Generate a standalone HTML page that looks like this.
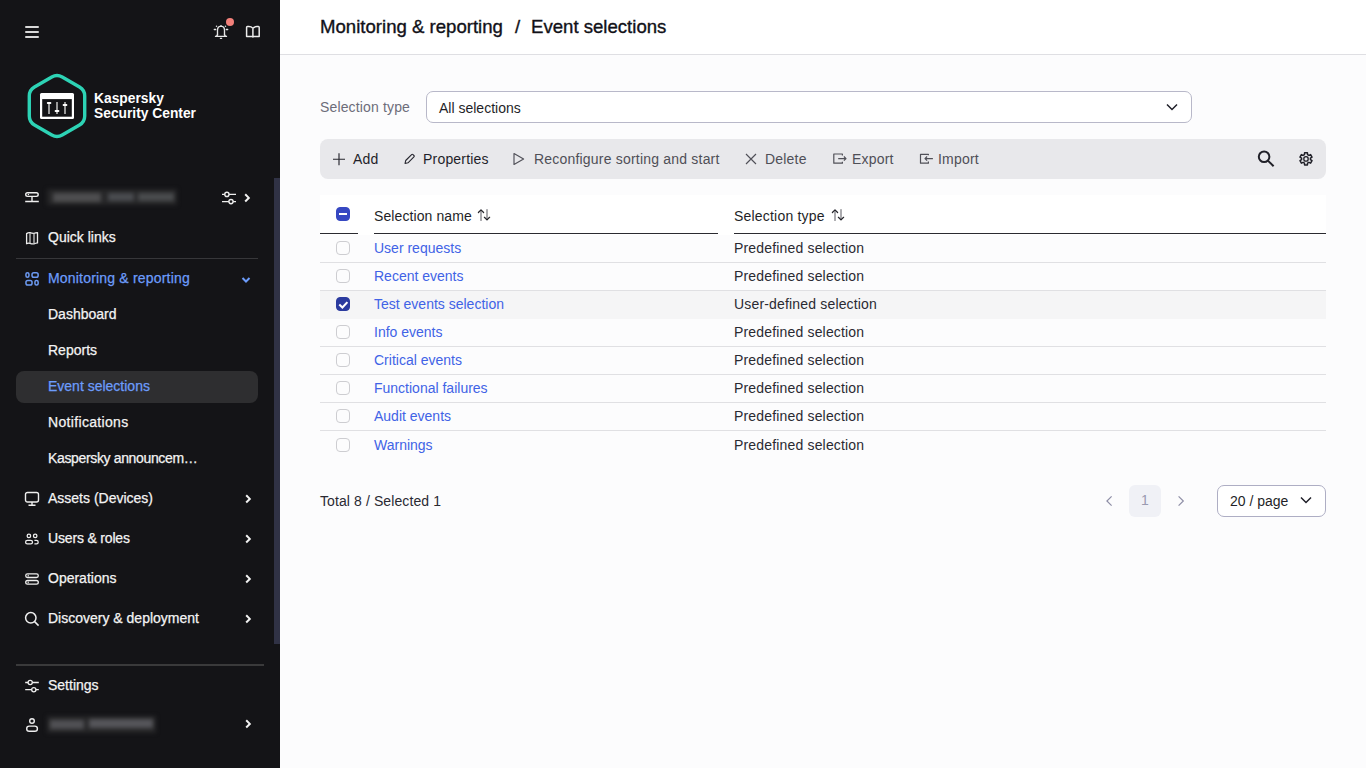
<!DOCTYPE html>
<html><head><meta charset="utf-8">
<style>
*{box-sizing:border-box;margin:0;padding:0}
html,body{width:1366px;height:768px;overflow:hidden}
body{font-family:"Liberation Sans",sans-serif;font-size:14px;background:#fcfcfd;position:relative;color:#2a2a32}
.a{position:absolute}
#side{left:0;top:0;width:280px;height:768px;background:#141417;color:#f3f3f3}
.mi{position:absolute;-webkit-text-stroke:0.25px currentColor;left:48px;height:20px;line-height:20px;white-space:nowrap}
.ic{position:absolute}
.chev{position:absolute;left:244px}
#main{left:280px;top:0;width:1086px;height:768px}
.t{position:absolute;margin-top:1px;height:20px;line-height:20px;white-space:nowrap}
.row{position:absolute;left:320px;width:1006px;border-top:1px solid #e0e0e3}
.cb{position:absolute;left:336px;width:14px;height:14px;border:1px solid #cdcdd1;border-radius:4px;background:transparent}
.lk{color:#4163e6}
.tb{position:absolute;margin-top:1px;letter-spacing:0.2px;top:148px;height:20px;line-height:20px;white-space:nowrap}
.dis{color:#4f4f57}
</style></head><body>
<div id="side" class="a">
  <!-- hamburger -->
  <div class="a" style="left:25px;top:26px;width:14px;height:2px;background:#d8d8d8;border-radius:1px"></div>
  <div class="a" style="left:25px;top:31px;width:14px;height:2px;background:#d8d8d8;border-radius:1px"></div>
  <div class="a" style="left:25px;top:36px;width:14px;height:2px;background:#d8d8d8;border-radius:1px"></div>
  <!-- bell -->
  <svg class="a" style="left:210px;top:20px" width="22" height="22" viewBox="210 20 22 22" fill="none" stroke="#e6e6e6" stroke-width="1.35" stroke-linecap="round">
    <path d="M217.5 35V30.2Q217.5 26.4 221 26.1Q224.5 26.4 224.5 30.2V35"/><path d="M215.5 36.3H226.5M215.5 36.3Q217.5 36 217.5 34.6M226.5 36.3Q224.5 36 224.5 34.6"/><path d="M220.4 38.3H221.6"/>
    <path d="M214.3 29.5H215.7M226.3 29.5H227.7"/><circle cx="216.5" cy="26.3" r=".75" fill="#e6e6e6" stroke="none"/><circle cx="225.5" cy="26.3" r=".75" fill="#e6e6e6" stroke="none"/><circle cx="221" cy="25.6" r=".7" fill="#e6e6e6" stroke="none"/>
  </svg>
  <div class="a" style="left:225.6px;top:17.7px;width:8.5px;height:8.5px;border-radius:50%;background:#f3807a"></div>
  <!-- book -->
  <svg class="a" style="left:240px;top:20px" width="25" height="22" viewBox="240 20 25 22" fill="none" stroke="#ececec" stroke-width="1.5" stroke-linejoin="round">
    <path d="M252.9 28.2Q251.3 26.6 248.8 26.6H247.4Q246.6 26.6 246.6 27.4V36.4H252.9"/><path d="M252.9 28.2Q254.5 26.6 257 26.6H258.4Q259.2 26.6 259.2 27.4V36.4H252.9"/><path d="M252.9 28.2V37.6"/>
  </svg>
  <!-- logo -->
  <svg class="a" style="left:0;top:0" width="100" height="150" viewBox="0 0 100 150">
    <path d="M51.80 77.00 Q57.00 74.00 62.20 77.00 L79.52 87.00 Q84.71 90.00 84.71 96.00 L84.71 116.00 Q84.71 122.00 79.52 125.00 L62.20 135.00 Q57.00 138.00 51.80 135.00 L34.48 125.00 Q29.29 122.00 29.29 116.00 L29.29 96.00 Q29.29 90.00 34.48 87.00 Z" fill="none" stroke="#2dd3b5" stroke-width="3.4"/>
    <rect x="40" y="93" width="34" height="26" rx="1.5" fill="#fff"/>
    <rect x="42.2" y="99.1" width="29.6" height="17.6" fill="#141417"/>
    <rect x="48" y="102" width="2" height="12" fill="#999"/>
    <rect x="56" y="102" width="2" height="12" fill="#999"/>
    <rect x="64" y="102" width="2" height="12" fill="#999"/>
    <rect x="46.8" y="102" width="4.6" height="2" rx="1" fill="#fff"/>
    <rect x="54.6" y="110.1" width="4.8" height="2" rx="1" fill="#fff"/>
    <rect x="62.6" y="104.1" width="4.8" height="2" rx="1" fill="#fff"/>
  </svg>
  <div class="a" style="left:94px;top:91px;font-weight:bold;font-size:13.8px;line-height:15px;color:#fff">Kaspersky<br>Security Center</div>

  <!-- server row -->
  <svg class="ic" style="left:20px;top:186px" width="24" height="24" viewBox="20 186 24 24" fill="none" stroke="#eee" stroke-width="1.4">
    <rect x="25.7" y="192.8" width="12.5" height="3.6" rx="1.8"/><path d="M32 196.6v4.9M25.2 201.5h13.6"/><circle cx="28.4" cy="194.5" r=".7" fill="#eee" stroke="none"/>
  </svg>
  <div class="a" style="left:47px;top:189px;width:130px;height:16px;filter:blur(2.2px)"><div class="a" style="left:0;top:0;width:130px;height:16px;background:#262628"></div><div class="a" style="left:6px;top:4px;width:48px;height:9px;background:#4e4e50"></div><div class="a" style="left:61px;top:4px;width:26px;height:8px;background:#4a4c50"></div><div class="a" style="left:91px;top:4px;width:36px;height:8px;background:#4a4c4e"></div></div>
  <svg class="ic" style="left:218px;top:188px" width="22" height="18" viewBox="218 188 22 18" fill="none" stroke="#eee" stroke-width="1.4"><path d="M222 194.4H224.8M229 194.4H236M222 201.6H228.9M233.1 201.6H236"/><circle cx="226.9" cy="194.4" r="2.1"/><circle cx="231" cy="201.6" r="2.1"/></svg>
  <svg class="chev" style="left:242px;top:192px" width="10" height="11" viewBox="0 0 10 11" fill="none" stroke="#f2f2f2" stroke-width="2"><path d="M3.2 2.3l3.6 3.6-3.6 3.6"/></svg>

  <!-- Quick links -->
  <svg class="ic" style="left:20px;top:226px" width="24" height="24" viewBox="20 226 24 24" fill="none" stroke="#eee" stroke-width="1.3" stroke-linejoin="round">
    <path d="M26.6 233.6Q28.3 232.4 30 232.7Q32 233.4 34 233.3Q35.6 232.8 37.5 232.6V242.9Q35.8 243.2 34 243.8Q32 244 30 243.3Q28.3 242.8 26.6 243.7Z"/><path d="M30 232.9v10.3M34 233.3v10.3" stroke="#c8c8c8"/>
  </svg>
  <div class="mi" style="top:227px">Quick links</div>
  <div class="a" style="left:16px;top:258px;width:242px;height:1px;background:#37373a"></div>

  <!-- Monitoring -->
  <svg class="ic" style="left:20px;top:266px" width="24" height="24" viewBox="20 266 24 24" fill="none" stroke="#6c9af2" stroke-width="1.5">
    <rect x="25.95" y="272.85" width="3" height="4.4" rx="1.5"/><rect x="32" y="272.85" width="6.15" height="4.4" rx="1.8"/><rect x="25.95" y="280.5" width="6.1" height="4.55" rx="1.8"/><rect x="34.95" y="280.5" width="3.2" height="4.55" rx="1.5"/>
  </svg>
  <div class="mi" style="top:268px;color:#6c9cfb;letter-spacing:0.19px">Monitoring &amp; reporting</div>
  <svg class="chev" style="left:241px;top:276px" width="10" height="8" viewBox="0 0 10 8" fill="none" stroke="#6c9cfb" stroke-width="2"><path d="M1.5 2l3.5 3.5 3.5-3.5"/></svg>

  <div class="mi" style="top:304px">Dashboard</div>
  <div class="mi" style="top:340px">Reports</div>
  <div class="a" style="left:16px;top:371px;width:242px;height:32px;background:#2e2e30;border-radius:8px"></div>
  <div class="mi" style="top:376px;color:#6c9cfb">Event selections</div>
  <div class="mi" style="top:412px;letter-spacing:0.33px">Notifications</div>
  <div class="mi" style="top:448px;letter-spacing:-0.35px">Kaspersky announcem…</div>

  <!-- Assets -->
  <svg class="ic" style="left:24px;top:491px" width="16" height="16" viewBox="0 0 16 16" fill="none" stroke="#eee" stroke-width="1.4">
    <rect x="1.5" y="1.5" width="13" height="9.5" rx="2"/><path d="M8 11v3.3M4.5 14.3h7"/>
  </svg>
  <div class="mi" style="top:488px">Assets (Devices)</div>
  <svg class="chev" style="left:243px;top:493px" width="10" height="11" viewBox="0 0 10 11" fill="none" stroke="#f2f2f2" stroke-width="2"><path d="M3.2 2.3l3.6 3.6-3.6 3.6"/></svg>

  <svg class="ic" style="left:20px;top:528px" width="24" height="22" viewBox="20 528 24 22" fill="none" stroke="#eee" stroke-width="1.3"><circle cx="28.9" cy="535.9" r="1.75"/><circle cx="35.2" cy="535.9" r="1.75"/><rect x="25.6" y="540.4" width="6.9" height="3.5" rx="1.75"/><path d="M34.4 540.4H36.5Q38.2 540.4 38.2 542.15Q38.2 543.9 36.5 543.9H34.4"/></svg>
  <div class="mi" style="top:528px;letter-spacing:-0.17px">Users &amp; roles</div>
  <svg class="chev" style="left:243px;top:533px" width="10" height="11" viewBox="0 0 10 11" fill="none" stroke="#f2f2f2" stroke-width="2"><path d="M3.2 2.3l3.6 3.6-3.6 3.6"/></svg>

  <svg class="ic" style="left:20px;top:568px" width="24" height="22" viewBox="20 568 24 22" fill="none" stroke="#eee" stroke-width="1.3"><rect x="25.7" y="573.9" width="12.6" height="3.6" rx="1.8"/><rect x="25.7" y="580.5" width="12.6" height="3.7" rx="1.85"/><path d="M28.2 574.8v1.8M28.2 581.4v1.9" stroke-width="1.1"/></svg>
  <div class="mi" style="top:568px">Operations</div>
  <svg class="chev" style="left:243px;top:573px" width="10" height="11" viewBox="0 0 10 11" fill="none" stroke="#f2f2f2" stroke-width="2"><path d="M3.2 2.3l3.6 3.6-3.6 3.6"/></svg>

  <svg class="ic" style="left:24px;top:611px" width="16" height="16" viewBox="0 0 16 16" fill="none" stroke="#eee" stroke-width="1.5">
    <circle cx="6.8" cy="6.8" r="5.2"/><path d="M10.6 10.6l4 4"/>
  </svg>
  <div class="mi" style="top:608px">Discovery &amp; deployment</div>
  <svg class="chev" style="left:243px;top:613px" width="10" height="11" viewBox="0 0 10 11" fill="none" stroke="#f2f2f2" stroke-width="2"><path d="M3.2 2.3l3.6 3.6-3.6 3.6"/></svg>

  <!-- scrollbar -->
  <div class="a" style="left:274px;top:178px;width:6px;height:466px;background:#303245"></div>

  <div class="a" style="left:16px;top:664px;width:248px;height:2px;background:#3a3a3b"></div>
  <svg class="ic" style="left:20px;top:674px" width="24" height="22" viewBox="20 674 24 22" fill="none" stroke="#eee" stroke-width="1.3"><path d="M25.2 682.5H28.1M32.3 682.5H38.8M25.2 689.7H31.7M35.9 689.7H38.8"/><circle cx="30.2" cy="682.5" r="2.1"/><circle cx="33.8" cy="689.7" r="2.1"/></svg>
  <div class="mi" style="top:675px">Settings</div>
  <svg class="ic" style="left:20px;top:712px" width="24" height="24" viewBox="20 712 24 24" fill="none" stroke="#eee" stroke-width="1.4"><circle cx="32" cy="721" r="2.3"/><rect x="26.7" y="726.1" width="10.7" height="5.2" rx="2.6"/></svg>
  <div class="a" style="left:47px;top:716px;width:109px;height:17px;filter:blur(2.2px)"><div class="a" style="left:0;top:0;width:109px;height:17px;background:#262628"></div><div class="a" style="left:3px;top:4px;width:34px;height:9px;background:#505054"></div><div class="a" style="left:42px;top:3px;width:64px;height:9px;background:#55555a"></div></div>
  <svg class="chev" style="left:243px;top:718px" width="10" height="11" viewBox="0 0 10 11" fill="none" stroke="#f2f2f2" stroke-width="2"><path d="M3.2 2.3l3.6 3.6-3.6 3.6"/></svg>
</div>

<!-- header -->
<div class="a" style="left:280px;top:0;width:1086px;height:55px;background:#fff;border-bottom:1px solid #dfdfe3"></div>
<div class="t" style="left:320px;top:15px;font-size:18.6px;height:22px;line-height:22px;color:#111118;-webkit-text-stroke:0.35px #111118">Monitoring &amp; reporting</div><div class="t" style="left:515px;top:15px;font-size:18.6px;height:22px;line-height:22px;color:#111118;-webkit-text-stroke:0.35px #111118">/</div><div class="t" style="left:531px;top:15px;font-size:18.6px;height:22px;line-height:22px;color:#111118;-webkit-text-stroke:0.35px #111118">Event selections</div>

<!-- selection type -->
<div class="t" style="left:320px;top:96px;color:#6d6d7a;letter-spacing:0.15px">Selection type</div>
<div class="a" style="left:426px;top:91px;width:766px;height:32px;border:1px solid #b8b8c9;border-radius:7px;background:#fff"></div>
<div class="t" style="left:439px;top:97px;color:#1f1f28">All selections</div>
<svg class="a" style="left:1165px;top:102px" width="14" height="10" viewBox="0 0 14 10" fill="none" stroke="#1f1f28" stroke-width="1.5"><path d="M2 2.5l5 5 5-5"/></svg>

<!-- toolbar -->
<div class="a" style="left:320px;top:139px;width:1006px;height:40px;background:#e8e8eb;border-radius:8px"></div>
<svg class="a" style="left:330px;top:150px" width="18" height="18" viewBox="330 150 18 18" fill="none" stroke="#26262e" stroke-width="1.15"><path d="M339 153.2V165.2M333 159.2H345"/></svg>
<div class="tb" style="left:353px;color:#1f1f2a">Add</div>
<svg class="a" style="left:400px;top:150px" width="18" height="18" viewBox="400 150 18 18" fill="none" stroke="#26262e" stroke-width="1.1" stroke-linejoin="round"><path d="M405 163.5L405.7 160.5L411.6 154.6Q412.3 153.9 413 154.6L413.9 155.5Q414.6 156.2 413.9 156.9L408 162.8Z"/></svg>
<div class="tb" style="left:423px;color:#1f1f2a">Properties</div>
<svg class="a" style="left:510px;top:150px" width="18" height="18" viewBox="510 150 18 18" fill="none" stroke="#505058" stroke-width="1.15" stroke-linejoin="round"><path d="M514 153.6V164.4L523.6 159Z"/></svg>
<div class="tb dis" style="left:534px">Reconfigure sorting and start</div>
<svg class="a" style="left:742px;top:150px" width="18" height="18" viewBox="742 150 18 18" fill="none" stroke="#505058" stroke-width="1.15"><path d="M746 154L756 164M756 154L746 164"/></svg>
<div class="tb dis" style="left:765px">Delete</div>
<svg class="a" style="left:828px;top:148px" width="24" height="22" viewBox="828 148 24 22" fill="none" stroke="#505058" stroke-width="1.2" stroke-linejoin="round"><path d="M842.4 155.5V154H833.8V163.2H842.4V161.7M838.2 158.6H846M843.9 156.5L846 158.6 843.9 160.7"/></svg>
<div class="tb dis" style="left:852px">Export</div>
<svg class="a" style="left:914px;top:148px" width="24" height="22" viewBox="914 148 24 22" fill="none" stroke="#505058" stroke-width="1.2" stroke-linejoin="round"><path d="M928.4 155.3V154.3H920.5V163.2H928.4V161.5M932.9 158.6H925M927.1 156.5L925 158.6 927.1 160.7"/></svg>
<div class="tb dis" style="left:938px">Import</div>
<svg class="a" style="left:1250px;top:144px" width="70" height="30" viewBox="1250 144 70 30" fill="none" stroke="#202028" stroke-width="2">
  <circle cx="1264.1" cy="156.8" r="5.3"/><path d="M1267.9 160.6L1273.6 166.3"/>
  <path d="M1304.46 154.67 L1304.58 152.76 L1307.42 152.76 L1307.54 154.67 L1308.89 155.45 L1310.61 154.60 L1312.02 157.06 L1310.43 158.12 L1310.43 159.68 L1312.02 160.74 L1310.61 163.20 L1308.89 162.35 L1307.54 163.13 L1307.42 165.04 L1304.58 165.04 L1304.46 163.13 L1303.11 162.35 L1301.39 163.20 L1299.98 160.74 L1301.57 159.68 L1301.57 158.12 L1299.98 157.06 L1301.39 154.60 L1303.11 155.45Z" stroke-width="1.5" stroke-linejoin="round"/><circle cx="1306" cy="158.9" r="2.2" stroke-width="1.3"/>
</svg>

<!-- table -->
<div class="a" style="left:320px;top:195px;width:1006px;height:40px;background:#fff"></div>
<div class="cb" style="top:207px;background:#3648c2;border-color:#3648c2"></div>
<div class="a" style="left:339px;top:213px;width:8px;height:2px;background:#fff"></div>
<div class="t" style="left:374px;top:205px;color:#1f1f28;letter-spacing:0.1px">Selection name</div>
<svg class="a" style="left:472px;top:204px" width="24" height="24" viewBox="472 204 24 24" fill="none" stroke-width="1.25" stroke-linecap="round" stroke-linejoin="round"><path d="M481.0 220.4V210.3M487.0 209.5V219.6" stroke="#7a7a80"/><path d="M478.4 212.5L481.0 209.9L483.6 212.5M484.4 217.3L487.0 219.9L489.6 217.3" stroke="#26262c"/></svg>
<div class="t" style="left:734px;top:205px;color:#1f1f28;letter-spacing:0.2px">Selection type</div>
<svg class="a" style="left:826px;top:204px" width="24" height="24" viewBox="826 204 24 24" fill="none" stroke-width="1.25" stroke-linecap="round" stroke-linejoin="round"><path d="M835.0 220.4V210.3M841.0 209.5V219.6" stroke="#7a7a80"/><path d="M832.4 212.5L835.0 209.9L837.6 212.5M838.4 217.3L841.0 219.9L843.6 217.3" stroke="#26262c"/></svg>
<div class="a" style="left:320px;top:233px;width:38px;height:1px;background:#2a2a30"></div>
<div class="a" style="left:374px;top:233px;width:344px;height:1px;background:#2a2a30"></div>
<div class="a" style="left:734px;top:233px;width:592px;height:1px;background:#2a2a30"></div>

<div class="row" style="top:262px"></div>
<div class="row" style="top:290px"></div>
<div class="row" style="top:318px"></div>
<div class="row" style="top:346px"></div>
<div class="row" style="top:374px"></div>
<div class="row" style="top:402px"></div>
<div class="row" style="top:430px"></div>
<div class="a" style="left:320px;top:291px;width:1006px;height:28px;background:#f5f5f6"></div>

<div class="cb" style="top:241px"></div>
<div class="cb" style="top:269px"></div>
<div class="cb" style="top:297px;background:#2b3b9f;border-color:#2b3b9f"></div>
<svg class="a" style="left:336px;top:297px" width="14" height="14" viewBox="336 297 14 14" fill="none" stroke="#fff" stroke-width="2.1"><path d="M339.3 304.6L342.4 307.5L347.4 302.1"/></svg>
<div class="cb" style="top:325px"></div>
<div class="cb" style="top:353px"></div>
<div class="cb" style="top:381px"></div>
<div class="cb" style="top:409px"></div>
<div class="cb" style="top:438px"></div>

<div class="t lk" style="left:374px;top:237px">User requests</div>
<div class="t lk" style="left:374px;top:265px">Recent events</div>
<div class="t lk" style="left:374px;top:293px">Test events selection</div>
<div class="t lk" style="left:374px;top:321px">Info events</div>
<div class="t lk" style="left:374px;top:349px">Critical events</div>
<div class="t lk" style="left:374px;top:377px">Functional failures</div>
<div class="t lk" style="left:374px;top:405px">Audit events</div>
<div class="t lk" style="left:374px;top:434px">Warnings</div>

<div class="t" style="left:734px;top:237px;letter-spacing:0.17px">Predefined selection</div>
<div class="t" style="left:734px;top:265px;letter-spacing:0.17px">Predefined selection</div>
<div class="t" style="left:734px;top:293px;letter-spacing:0.17px">User-defined selection</div>
<div class="t" style="left:734px;top:321px;letter-spacing:0.17px">Predefined selection</div>
<div class="t" style="left:734px;top:349px;letter-spacing:0.17px">Predefined selection</div>
<div class="t" style="left:734px;top:377px;letter-spacing:0.17px">Predefined selection</div>
<div class="t" style="left:734px;top:405px;letter-spacing:0.17px">Predefined selection</div>
<div class="t" style="left:734px;top:434px;letter-spacing:0.17px">Predefined selection</div>

<!-- footer -->
<div class="t" style="left:320px;top:490px;color:#2a2a33;letter-spacing:0.1px">Total 8 / Selected 1</div>
<svg class="a" style="left:1100px;top:490px" width="20" height="22" viewBox="1100 490 20 22" fill="none" stroke="#8e8ea6" stroke-width="1.2"><path d="M1111.6 496.3L1106.9 501L1111.6 505.7"/></svg>
<div class="a" style="left:1129px;top:485px;width:32px;height:32px;background:#f0f1f6;border-radius:6px"></div>
<div class="t" style="left:1129px;top:489px;width:32px;text-align:center;color:#9a9ab0">1</div>
<svg class="a" style="left:1170px;top:490px" width="20" height="22" viewBox="1170 490 20 22" fill="none" stroke="#8e8ea6" stroke-width="1.2"><path d="M1178.6 496.3L1183.3 501L1178.6 505.7"/></svg>
<div class="a" style="left:1217px;top:485px;width:109px;height:32px;border:1px solid #aeaec4;border-radius:7px;background:#fff"></div>
<div class="t" style="left:1230px;top:490px;color:#1f1f28">20 / page</div>
<svg class="a" style="left:1299px;top:495px" width="14" height="10" viewBox="0 0 14 10" fill="none" stroke="#1f1f28" stroke-width="1.5"><path d="M2 2.5l5 5 5-5"/></svg>
</body></html>
